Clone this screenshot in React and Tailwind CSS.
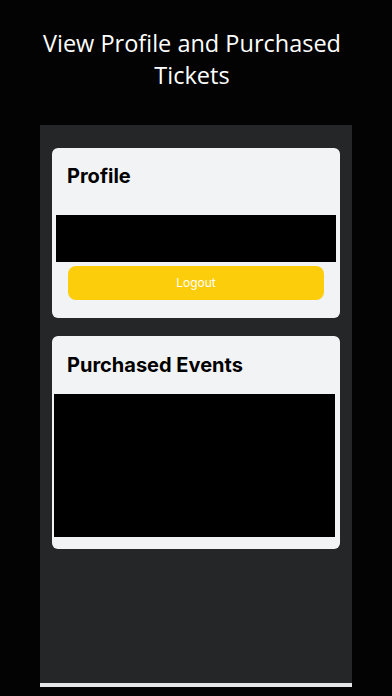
export default function App() {
  return (
    <div className="w-[392px] h-[696px] bg-[#030303] flex flex-col items-center overflow-hidden" style={{ fontFamily: "'Open Sans', sans-serif" }}>
      <h1 className="mt-[27px] mr-[8px] text-white text-[23.5px] leading-[32px] text-center font-normal w-[330px]">
        View Profile and Purchased Tickets
      </h1>
      <div className="mt-[34px] w-[312px] h-[562px] bg-[#252627] flex flex-col px-[12px] pt-[23px] border-b-[4px] border-[#e6e6e8]" style={{ fontFamily: "Inter, sans-serif" }}>
        <div className="bg-[#f2f3f5] rounded-[6px] h-[170px] flex flex-col">
          <div className="pl-[15px] pt-[16px] text-[20px] leading-[24px] font-bold text-black">Profile</div>
          <div className="mt-[27px] mx-[4px] h-[47px] bg-black"></div>
          <button className="mt-[4px] mx-[16px] h-[34px] rounded-[8px] bg-[#fccd0a] text-white text-[12px]">Logout</button>
        </div>
        <div className="mt-[18px] bg-[#f2f3f5] rounded-[6px] h-[213px] flex flex-col">
          <div className="pl-[15px] pt-[17px] text-[20px] leading-[24px] font-bold text-black">Purchased Events</div>
          <div className="mt-[17px] ml-[2px] mr-[5px] h-[143px] bg-black"></div>
        </div>
      </div>
    </div>
  );
}
